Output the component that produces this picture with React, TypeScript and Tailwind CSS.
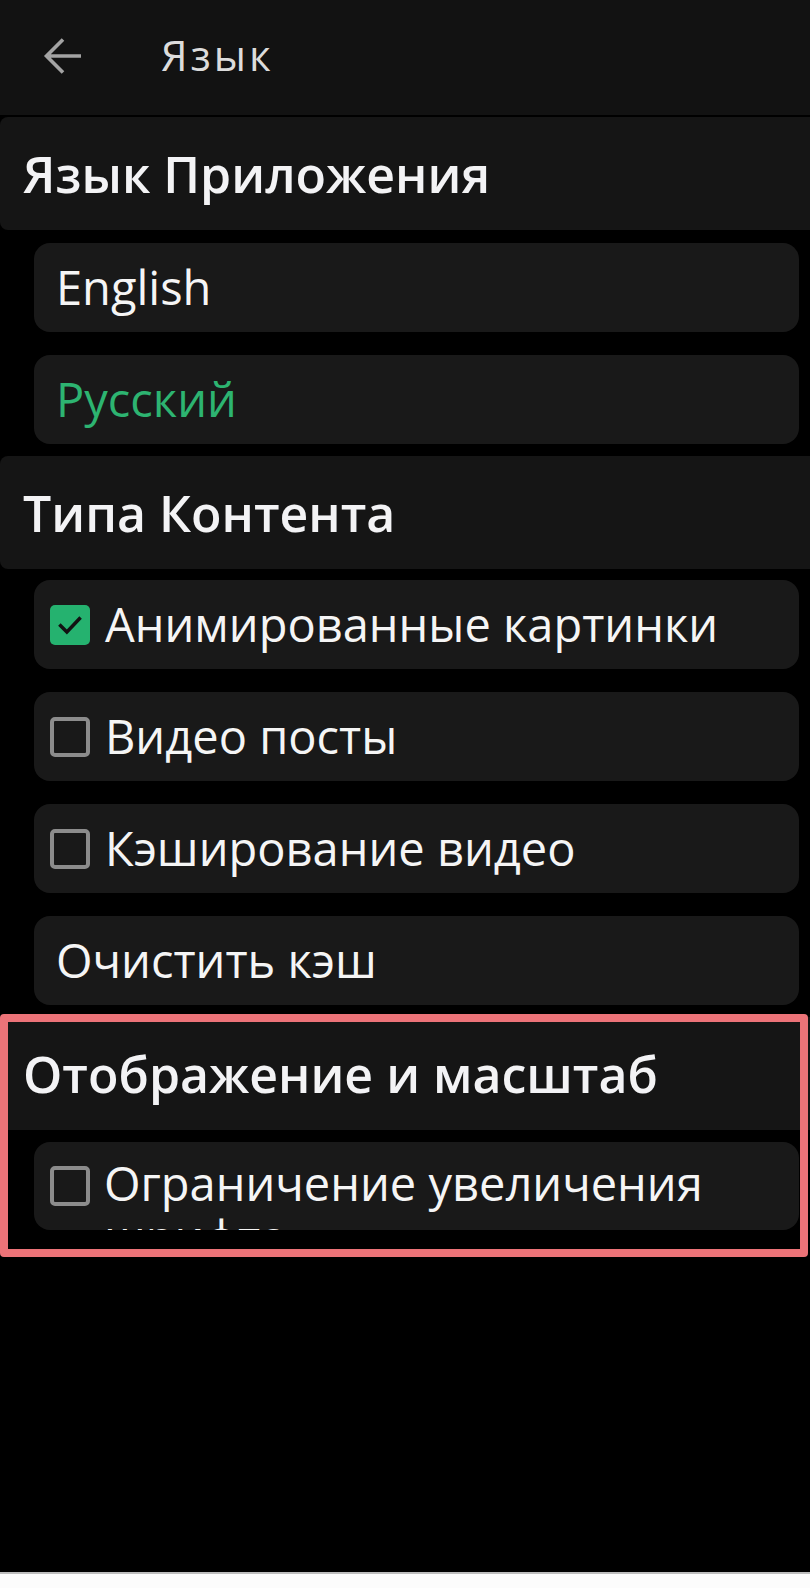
import React from "react";

const font = { fontFamily: '"Open Sans", "Noto Sans", sans-serif' };

function Check({ checked }: { checked?: boolean }) {
  if (checked) {
    return (
      <div className="w-[40px] h-[40px] rounded-[5px] bg-[#25b26f] flex items-center justify-center shrink-0">
        <svg width="30" height="30" viewBox="0 0 24 24" fill="none">
          <path d="M4.5 12.5l5 5L19.5 7" stroke="#121212" strokeWidth="2.8" strokeLinecap="square" />
        </svg>
      </div>
    );
  }
  return <div className="w-[40px] h-[40px] rounded-[5px] border-[4px] border-[#8c8c8c] shrink-0" />;
}

function Header({ title }: { title: string }) {
  return (
    <div className="h-[113px] bg-[#151515] rounded-l-[8px] flex items-center pl-[23px]">
      <span className="text-[50px] font-semibold text-[#f3f3f5] leading-none">{title}</span>
    </div>
  );
}

function Item({ label, green, check }: { label: string; green?: boolean; check?: "on" | "off" }) {
  return (
    <div className="ml-[34px] mr-[11px] h-[89px] bg-[#191919] rounded-[16px] flex items-center">
      {check ? (
        <div className="flex items-center pl-[16px] gap-[15px]">
          <Check checked={check === "on"} />
          <span className="text-[47px] text-[#f5f5f5] leading-none">{label}</span>
        </div>
      ) : (
        <span className={"pl-[22px] text-[47px] leading-none " + (green ? "text-[#2db471]" : "text-[#f5f5f5]")}>{label}</span>
      )}
    </div>
  );
}

export default function App() {
  return (
    <div className="w-[810px] h-[1588px] bg-black flex flex-col overflow-hidden" style={font}>
      <div className="h-[115px] bg-[#121212] flex items-center shrink-0">
        <svg className="ml-[43px] -mt-[4px]" width="40" height="40" viewBox="0 0 40 40" fill="none">
          <path d="M4 20h34M20 3.5L3.5 20 20 36.5" stroke="#a3a3a3" strokeWidth="3.6" />
        </svg>
        <span className="ml-[78px] -mt-[6px] text-[42px] tracking-[3px] text-[#dcdcdc] leading-none">Язык</span>
      </div>
      <div className="h-[2px] shrink-0" />
      <div className="flex flex-col">
        <Header title="Язык Приложения" />
        <div className="h-[13px]" />
        <div className="flex flex-col gap-[23px]">
          <Item label="English" />
          <Item label="Русский" green />
        </div>
        <div className="h-[12px]" />
        <Header title="Типа Контента" />
        <div className="h-[11px]" />
        <div className="flex flex-col gap-[23px]">
          <Item label="Анимированные картинки" check="on" />
          <Item label="Видео посты" check="off" />
          <Item label="Кэширование видео" check="off" />
          <Item label="Очистить кэш" />
        </div>
        <div className="h-[12px]" />
        <div className="relative">
          <Header title="Отображение и масштаб" />
          <div className="h-[12px]" />
          <div className="ml-[34px] mr-[11px] h-[88px] bg-[#191919] rounded-[16px] flex items-start overflow-hidden">
            <div className="mt-[24px] ml-[16px] shrink-0">
              <Check />
            </div>
            <span className="ml-[14px] pt-[14px] text-[47px] leading-[54px] text-[#f5f5f5]">Ограничение увеличения шрифта</span>
          </div>
          <div className="absolute left-0 top-[-3px] w-[808px] h-[243px] border-[8px] border-[#ec7378] rounded-[4px] pointer-events-none" />
        </div>
      </div>
      <div className="flex-1" />
      <div className="h-[16px] bg-[#fcfcfc] border-t-[2px] border-[#bdbdbd] shrink-0" />
    </div>
  );
}
